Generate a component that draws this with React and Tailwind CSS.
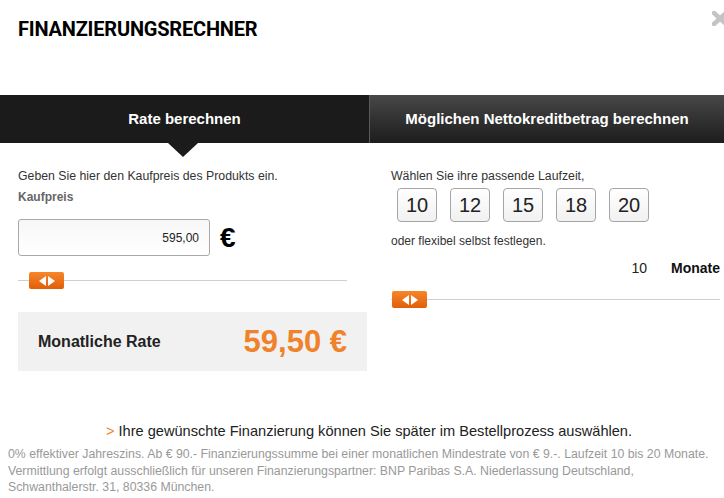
import { useState } from 'react';

const terms = [10, 12, 15, 18, 20];

function SliderHandle() {
  return (
    <div className="flex h-[17px] w-[35px] items-center justify-center gap-[2px] rounded-[2px] bg-gradient-to-b from-[#f7862a] to-[#e05f05]">
      <svg width="7" height="10" viewBox="0 0 7 10"><path d="M7 0 L0 5 L7 10 Z" fill="#fff" /></svg>
      <svg width="7" height="10" viewBox="0 0 7 10"><path d="M0 0 L7 5 L0 10 Z" fill="#fff" /></svg>
    </div>
  );
}

export default function App() {
  const [term, setTerm] = useState(10);

  return (
    <div className="relative h-[498px] w-[724px] overflow-hidden bg-white font-['Liberation_Sans',Arial,sans-serif] text-[#222]">
      {/* header */}
      <div className="h-[95px] px-[18px] pt-[18px]">
        <h1 className="font-['Roboto',sans-serif] text-[20px] font-bold leading-[22px] tracking-[-0.2px] text-black">
          FINANZIERUNGSRECHNER
        </h1>
      </div>
      <svg className="absolute left-[712px] top-[11px]" width="16" height="15" viewBox="0 0 16 15">
        <path d="M2 2 L14 13 M14 2 L2 13" stroke="#c4c4c4" strokeWidth="4.5" strokeLinecap="round" />
      </svg>

      {/* tabs */}
      <div className="flex h-[48px]">
        <div className="relative flex w-[369px] items-center justify-center bg-[#1b1b1b] text-[15px] font-bold text-white">
          Rate berechnen
          <div className="absolute left-[168px] top-[48px] h-0 w-0 border-x-[15px] border-t-[14px] border-x-transparent border-t-[#1b1b1b]" />
        </div>
        <div className="w-px bg-[#5a5a5a]" />
        <div className="flex flex-1 items-center justify-center bg-gradient-to-b from-[#484848] to-[#1d1d1d] text-[15px] font-bold text-white">
          Möglichen Nettokreditbetrag berechnen
        </div>
      </div>

      {/* content */}
      <div className="flex">
        <div className="w-[370px] pl-[18px] pt-[25px]">
          <p className="text-[12.3px] leading-[16px] text-[#333]">Geben Sie hier den Kaufpreis des Produkts ein.</p>
          <p className="mt-[5px] text-[12px] font-bold leading-[16px] text-[#666]">Kaufpreis</p>
          <div className="mt-[14px] flex items-center">
            <div className="flex h-[37px] w-[192px] items-center justify-end rounded-[3px] border border-[#a9a9a9] bg-gradient-to-b from-[#f7f7f7] to-white pr-[10px] text-[12px] text-[#222]">
              595,00
            </div>
            <span className="ml-[10px] text-[28px] font-bold leading-none text-black">€</span>
          </div>
          <div className="relative mt-[16px] flex h-[17px] w-[329px] items-center">
            <div className="h-px w-full bg-[#cfcfcf]" />
            <div className="absolute left-[11px] top-0">
              <SliderHandle />
            </div>
          </div>
          <div className="mt-[23px] flex h-[59px] w-[349px] items-center justify-between bg-[#f1f1f1] pl-[20px] pr-[20px]">
            <span className="text-[16px] font-bold text-[#222]">Monatliche Rate</span>
            <span className="text-[31px] font-bold leading-none text-[#f0822a]">59,50 €</span>
          </div>
        </div>

        <div className="flex-1 pl-[21px] pt-[25px]">
          <p className="text-[12.3px] leading-[16px] text-[#333]">Wählen Sie ihre passende Laufzeit,</p>
          <div className="ml-[6px] mt-[4px] flex gap-[13px]">
            {terms.map((t) => (
              <button
                key={t}
                onClick={() => setTerm(t)}
                className="flex h-[34px] w-[40px] items-center justify-center rounded-[4px] border border-[#a5a5a5] bg-gradient-to-b from-white to-[#f1f1f1] text-[20px] leading-none text-[#222]"
              >
                {t}
              </button>
            ))}
          </div>
          <p className="mt-[11px] text-[12px] leading-[16px] text-[#333]">oder flexibel selbst festlegen.</p>
          <div className="mt-[10px] flex justify-end pr-[4px] text-[14px] leading-[18px]">
            <span className="text-[#222]">{term}</span>
            <span className="ml-[24px] font-bold text-[#111]">Monate</span>
          </div>
          <div className="relative mt-[14px] flex h-[17px] w-[329px] items-center">
            <div className="h-px w-full bg-[#cfcfcf]" />
            <div className="absolute left-px top-0">
              <SliderHandle />
            </div>
          </div>
        </div>
      </div>

      {/* footer */}
      <div className="mt-[51px] pl-[14px] text-center text-[14.6px] leading-[18px] text-[#222]">
        <span className="text-[#f0822a]">&gt; </span>Ihre gewünschte Finanzierung können Sie später im Bestellprozess auswählen.
      </div>
      <div className="mt-[6px] px-[8px] text-[12.3px] leading-[16.5px] text-[#999]">
        0% effektiver Jahreszins. Ab € 90.- Finanzierungssumme bei einer monatlichen Mindestrate von € 9.-. Laufzeit 10 bis 20 Monate.
        <br />
        Vermittlung erfolgt ausschließlich für unseren Finanzierungspartner: BNP Paribas S.A. Niederlassung Deutschland,
        <br />
        Schwanthalerstr. 31, 80336 München.
      </div>
    </div>
  );
}
